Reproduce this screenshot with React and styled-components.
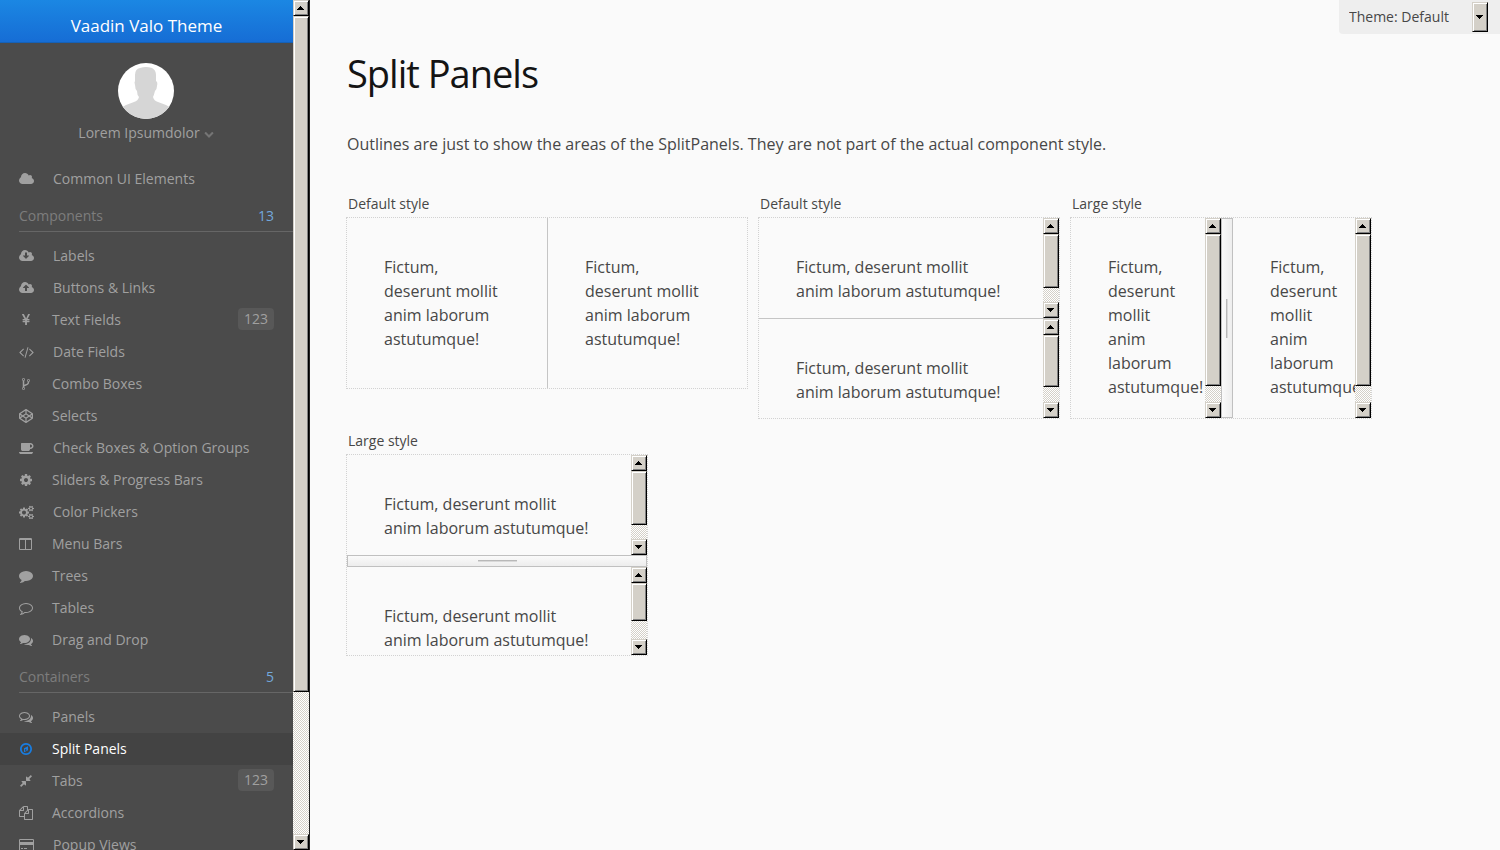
import React from "react";
import styled, { createGlobalStyle, css } from "styled-components";
import { FaCodepen } from "react-icons/fa";

const GlobalStyle = createGlobalStyle`
  *, *::before, *::after { box-sizing: border-box; }
  html, body, #root { height: 100%; }
  body {
    margin: 0;
    background: #fafafa;
    color: #474747;
    font: 400 16px/24px "Open Sans", "Noto Sans", sans-serif;
    overflow: hidden;
  }
  button, select { font: inherit; color: inherit; }
`;

const CLOUD =
  "M1984 1152q0 159-112.5 271.5t-271.5 112.5h-1088q-185 0-316.5-131.5t-131.5-316.5q0-130 70-240t188-165q-2-30-2-43 0-212 150-362t362-150q156 0 285.5 87t188.5 231q71-62 166-62 106 0 181 75t75 181q0 76-41 138 130 31 213.5 135.5t83.5 238.5z";
const BUBBLE =
  "M1792 896q0 174-120 321.5t-326 233-450 85.5q-70 0-145-8-198 175-460 242-49 14-114 22-17 2-30.5-9t-17.5-29v-1q-3-4-.5-12t2-10 4.5-9.5l6-9 7-8.5 8-9q7-8 31-34.5t34.5-38 31-39.5 32.5-51 27-59 26-76q-157-89-247.5-220t-90.5-281q0-130 71-248.5t191-204.5 286-136.5 348-50.5q244 0 450 85.5t326 233 120 321.5z";
const BACK_BUBBLE =
  "M1792 1024q0 120-71 224.5t-195 176.5q10 24 20.5 44t25 38.5 22.5 29 26 29.5 23 25q1 1 4 4.5t4.5 5 4 5 3.5 5.5l2.5 5 2 6 .5 6.5-1 6.5q-3 14-13 22t-22 7q-50-7-86-16-154-40-278-128-90 16-176 16-271 0-472-132 58 4 88 4 161 0 309-45t264-129q125-92 192-212t67-254q0-77-23-152 129 71 204 178t75 230z";
const FRONT_BUBBLE =
  "M1408 768q0 139-94 257t-256.5 186.5-353.5 68.5q-86 0-176-16-124 88-278 128-36 9-86 16h-3q-11 0-20.5-8t-11.5-21q-1-3-1-6.5t.5-6.5 2-6l2.5-5 3.5-5.5 4-5 4.5-5 4-4.5q5-6 23-25t26-29.5 22.5-29 25-38.5 20.5-44q-124-72-195-177t-71-224q0-139 94-257t256.5-186.5 353.5-68.5 353.5 68.5 256.5 186.5 94 257z";
const SMALL_COG =
  "v140q0 16-149 31-12 27-30 52 51 113 51 138 0 4-4 7-122 71-124 71-8 0-46-47t-52-68q-20 2-30 2t-30-2q-14 21-52 68t-46 47q-2 0-124-71-4-3-4-7 0-25 51-138-18-25-30-52-149-15-149-31v-140q0-16 149-31 13-29 30-52-51-113-51-138 0-4 4-7 4-2 35-20t59-34 30-16q8 0 46 46.5t52 67.5q20-2 30-2t30 2q51-71 92-112l6-2q4 0 124 70 4 3 4 7 0 25-51 138 17 23 30 52 149 15 149 31z";

const glyphs = {
  cloud: { x: 64, w: 1920, d: CLOUD },
  download: {
    x: 64,
    w: 1920,
    d: "M1344 864q0-14-9-23t-23-9h-224v-352q0-13-9.5-22.5t-22.5-9.5h-192q-13 0-22.5 9.5t-9.5 22.5v352h-224q-13 0-22.5 9.5t-9.5 22.5q0 14 9 23l352 352q9 9 23 9t23-9l351-351q10-12 10-24z" + CLOUD,
  },
  upload: {
    x: 64,
    w: 1920,
    d: "M1344 864q0-14-9-23l-352-352q-9-9-23-9t-23 9l-351 351q-10 12-10 24 0 14 9 23t23 9h224v352q0 13 9.5 22.5t22.5 9.5h192q13 0 22.5-9.5t9.5-22.5v-352h224q13 0 22.5-9.5t9.5-22.5z" + CLOUD,
  },
  yen: {
    x: 0,
    w: 1792,
    d: "M985.5 1536h-172q-13 0-22.5-9t-9.5-23v-330h-288q-13 0-22.5-9t-9.5-23v-103q0-13 9.5-22.5t22.5-9.5h288v-85h-288q-13 0-22.5-9t-9.5-23v-104q0-13 9.5-22.5t22.5-9.5h214l-321-578q-8-16 0-32 10-16 28-16h194q19 0 29 18l215 425q19 38 56 125 10-24 30.5-68t27.5-61l191-420q8-19 29-19h191q17 0 27 16 9 14 1 31l-313 579h215q13 0 22.5 9.5t9.5 22.5v104q0 14-9.5 23t-22.5 9h-290v85h290q13 0 22.5 9.5t9.5 22.5v103q0 14-9.5 23t-22.5 9h-290v330q0 13-9.5 22.5t-22.5 9.5z",
  },
  code: {
    x: 64,
    w: 1920,
    d: "M681 1399l-50 50q-10 10-23 10t-23-10l-466-466q-10-10-10-23t10-23l466-466q10-10 23-10t23 10l50 50q10 10 10 23t-10 23l-393 393 393 393q10 10 10 23t-10 23zm591-1067l-373 1291q-4 13-15.5 19.5t-23.5 2.5l-62-17q-13-4-19.5-15.5t-2.5-24.5l373-1291q4-13 15.5-19.5t23.5-2.5l62 17q13 4 19.5 15.5t2.5 24.5zm657 651l-466 466q-10 10-23 10t-23-10l-50-50q-10-10-10-23t10-23l393-393-393-393q-10-10-10-23t10-23l50-50q10-10 23-10t23 10l466 466q10 10 10 23t-10 23z",
  },
  fork: {
    x: 0,
    w: 1792,
    d: "M672 1472q0-40-28-68t-68-28-68 28-28 68 28 68 68 28 68-28 28-68zm0-1152q0-40-28-68t-68-28-68 28-28 68 28 68 68 28 68-28 28-68zm640 128q0-40-28-68t-68-28-68 28-28 68 28 68 68 28 68-28 28-68zm96 0q0 52-26 96.5t-70 69.5q-2 287-226 414-67 38-203 81-128 40-169.5 71t-41.5 100v26q44 25 70 69.5t26 96.5q0 80-56 136t-136 56-136-56-56-136q0-52 26-96.5t70-69.5v-820q-44-25-70-69.5t-26-96.5q0-80 56-136t136-56 136 56 56 136q0 52-26 96.5t-70 69.5v497q54-26 154-57 55-17 87.5-29.5t70.5-31 59-39.5 40.5-51 28-69.5 8.5-91.5q-44-25-70-69.5t-26-96.5q0-80 56-136t136-56 136 56 56 136z",
  },
  coffee: {
    x: 0,
    w: 1920,
    d: "M1664 640q0-80-56-136t-136-56h-64v384h64q80 0 136-56t56-136zm-1664 768h1792q0 106-75 181t-181 75h-1280q-106 0-181-75t-75-181zm1856-768q0 159-112.5 271.5t-271.5 112.5h-64v32q0 92-66 158t-158 66h-704q-92 0-158-66t-66-158v-736q0-26 19-45t45-19h1152q159 0 271.5 112.5t112.5 271.5z",
  },
  cog: {
    x: 0,
    w: 1792,
    d: "M1152 896q0-106-75-181t-181-75-181 75-75 181 75 181 181 75 181-75 75-181zm512-109v222q0 12-8 23t-20 13l-185 28q-19 54-39 91 35 50 107 138 10 12 10 25t-9 23q-27 37-99 108t-94 71q-12 0-26-9l-138-108q-44 23-91 38-16 136-29 186-7 28-36 28h-222q-14 0-24.5-8.5t-11.5-21.5l-28-184q-49-16-90-37l-141 107q-10 9-25 9-14 0-25-11-126-114-165-168-7-10-7-23 0-12 8-23 15-21 51-66.5t54-70.5q-27-50-41-99l-183-27q-13-2-21-12.5t-8-23.5v-222q0-12 8-23t19-13l186-28q14-46 39-92-40-57-107-138-10-12-10-24 0-10 9-23 26-36 98.5-107.5t94.5-71.5q13 0 26 10l138 107q44-23 91-38 16-136 29-186 7-28 36-28h222q14 0 24.5 8.5t11.5 21.5l28 184q49 16 90 37l142-107q9-9 24-9 13 0 25 10 129 119 165 170 7 8 7 22 0 12-8 23-15 21-51 66.5t-54 70.5q26 50 41 98l183 28q13 2 21 12.5t8 23.5z",
  },
  cogs: {
    x: 0,
    w: 1920,
    d:
      "M896 960q0-106-75-181t-181-75-181 75-75 181 75 181 181 75 181-75 75-181zm768 512q0-52-38-90t-90-38-90 38-38 90q0 53 37.5 90.5t90.5 37.5 90.5-37.5 37.5-90.5zm0-1024q0-52-38-90t-90-38-90 38-38 90q0 53 37.5 90.5t90.5 37.5 90.5-37.5 37.5-90.5zm-384 421v185q0 10-7 19.5t-16 10.5l-155 24q-11 35-32 76 34 48 90 115 7 11 7 20 0 12-7 19-23 30-82.5 89.5t-78.5 59.5q-11 0-21-7l-115-90q-37 19-77 31-11 108-23 155-7 24-30 24h-186q-11 0-20-7.5t-10-17.5l-23-153q-34-10-75-31l-118 89q-7 7-20 7-11 0-21-8-144-133-144-160 0-9 7-19 10-14 41-53t47-61q-23-44-35-82l-152-24q-10-1-17-9.5t-7-19.5v-185q0-10 7-19.5t16-10.5l155-24q11-35 32-76-34-48-90-115-7-11-7-20 0-12 7-20 22-30 82-89t79-59q11 0 21 7l115 90q34-18 77-32 11-108 23-154 7-24 30-24h186q11 0 20 7.5t10 17.5l23 153q34 10 75 31l118-89q8-7 20-7 11 0 21 8 144 133 144 160 0 8-7 19-12 16-42 54t-45 60q23 48 34 82l152 23q10 2 17 10.5t7 19.5z" +
      "M1920 1402" + SMALL_COG + "M1920 378" + SMALL_COG,
  },
  columns: {
    x: 0,
    w: 1792,
    d: "M160 1536h608v-1152h-640v1120q0 13 9.5 22.5t22.5 9.5zm1376-32v-1120h-640v1152h608q13 0 22.5-9.5t9.5-22.5zm128-1216v1216q0 66-47 113t-113 47h-1344q-66 0-113-47t-47-113v-1216q0-66 47-113t113-47h1344q66 0 113 47t47 113z",
  },
  comment: { x: 0, w: 1792, d: BUBBLE },
  commentOutline: {
    x: 0,
    w: 1792,
    d: "M896 384q-204 0-381.5 69.5t-282 187.5-104.5 255q0 112 71.5 213.5t201.5 175.5l87 50-27 96q-24 91-70 172 152-63 275-171l43-38 57 6q69 8 130 8 204 0 381.5-69.5t282-187.5 104.5-255-104.5-255-282-187.5-381.5-69.5z" + BUBBLE,
  },
  comments: { x: 0, w: 1792, d: FRONT_BUBBLE + BACK_BUBBLE },
  commentsOutline: {
    x: 0,
    w: 1792,
    d: "M704 384q-153 0-286 52t-211.5 141-78.5 191q0 82 53 158t149 132l97 56-35 84q34-20 62-39l44-31 53 10q78 14 153 14 153 0 286-52t211.5-141 78.5-191-78.5-191-211.5-141-286-52z" + FRONT_BUBBLE + BACK_BUBBLE,
  },
  compass: {
    x: -128,
    w: 1792,
    d: "M640 1152l256-128-256-128v256zm384-623v542l-512 256v-542zm288 367q0-148-73-273t-198-198-273-73-273 73-198 198-73 273 73 273 198 198 273 73 273-73 198-198 73-273zm224 0q0 209-103 385.5t-279.5 279.5-385.5 103-385.5-103-279.5-279.5-103-385.5 103-385.5 279.5-279.5 385.5-103 385.5 103 279.5 279.5 103 385.5z",
  },
  compress: {
    x: 0,
    w: 1792,
    d: "M896 960v448q0 26-19 45t-45 19-45-19l-144-144-332 332q-10 10-23 10t-23-10l-114-114q-10-10-10-23t10-23l332-332-144-144q-19-19-19-45t19-45 45-19h448q26 0 45 19t19 45zm755-672q0 13-10 23l-332 332 144 144q19 19 19 45t-19 45-45 19h-448q-26 0-45-19t-19-45v-448q0-26 19-45t45-19 45 19l144 144 332-332q10-10 23-10t23 10l114 114q10 10 10 23z",
  },
  copy: {
    x: 0,
    w: 1792,
    d: "M1696 384q40 0 68 28t28 68v1216q0 40-28 68t-68 28h-960q-40 0-68-28t-28-68v-288h-544q-40 0-68-28t-28-68v-672q0-40 20-88t48-76l408-408q28-28 76-48t88-20h416q40 0 68 28t28 68v328q68-40 128-40h416zm-544 213l-299 299h299v-299zm-640-384l-299 299h299v-299zm196 647l316-316v-416h-384v416q0 40-28 68t-68 28h-416v640h512v-256q0-40 20-88t48-76zm956 804v-1152h-384v416q0 40-28 68t-68 28h-416v640h896z",
  },
  card: {
    x: 0,
    w: 1920,
    d: "M1760 128q66 0 113 47t47 113v1216q0 66-47 113t-113 47h-1600q-66 0-113-47t-47-113v-1216q0-66 47-113t113-47h1600zm-1600 128q-13 0-22.5 9.5t-9.5 22.5v224h1664v-224q0-13-9.5-22.5t-22.5-9.5h-1600zm1600 1280q13 0 22.5-9.5t9.5-22.5v-608h-1664v608q0 13 9.5 22.5t22.5 9.5h1600zm-1504-128v-128h256v128h-256zm384 0v-128h384v128h-384z",
  },
  chevron: {
    x: 0,
    w: 1792,
    d: "M1683 808l-742 741q-19 19-45 19t-45-19l-742-741q-19-19-19-45.5t19-45.5l166-165q19-19 45-19t45 19l531 531 531-531q19-19 45-19t45 19l166 165q19 19 19 45.5t-19 45.5z",
  },
};

const IconSvg = styled.svg`
  flex: none;
  fill: currentColor;
`;

function Icon({ name, size = 14 }) {
  if (name === "codepen") return <FaCodepen size={size} />;
  const { x, w, d } = glyphs[name];
  return (
    <IconSvg width={(size * w) / 1792} height={size} viewBox={`${x} 0 ${w} 1792`} aria-hidden="true">
      <path fillRule="evenodd" d={d} />
    </IconSvg>
  );
}

/* ---------- scroll bars ---------- */

const raised = css`
  background: #d4d0c8;
  border: 1px solid;
  border-color: #d4d0c8 #000 #000 #d4d0c8;
  box-shadow: inset 1px 1px #fff, inset -1px -1px #808080;
`;

const Track = styled.div`
  flex: none;
  width: ${(p) => (p.$edge ? 17 : 16)}px;
  min-height: 0;
  display: flex;
  flex-direction: column;
  background: repeating-conic-gradient(#d4d0c8 0 25%, #fff 0 50%) 0 0 / 2px 2px;
  border-right: ${(p) => (p.$edge ? "1px solid #222" : "0")};
`;

const ArrowButton = styled.button`
  ${raised}
  flex: none;
  width: 16px;
  height: ${(p) => (p.$tall ? 30 : 16)}px;
  padding: 0 1px 0 0;
  display: grid;
  place-items: center;
`;

const Thumb = styled.div`
  ${raised}
  width: 16px;
  flex: 0 0 ${(p) => p.$share}%;
`;

const Rail = styled.div`
  flex: 1;
  min-height: 0;
  display: flex;
  flex-direction: column;
`;

function Arrow({ up }) {
  return (
    <svg width="7" height="4" viewBox="0 0 7 4" shapeRendering="crispEdges" aria-hidden="true">
      <path d={up ? "M3 0h1v1h1v1h1v1h1v1H0V3h1V2h1V1h1z" : "M0 0h7v1H6v1H5v1H4v1H3V3H2V2H1V1H0z"} />
    </svg>
  );
}

function Scrollbar({ share, edge }) {
  return (
    <Track $edge={edge}>
      <ArrowButton type="button" aria-label="Scroll up"><Arrow up /></ArrowButton>
      <Rail><Thumb $share={share} /></Rail>
      <ArrowButton type="button" aria-label="Scroll down"><Arrow /></ArrowButton>
    </Track>
  );
}

/* ---------- side menu ---------- */

const Page = styled.div`
  display: flex;
  height: 100vh;
`;

const Sidebar = styled.aside`
  flex: none;
  display: flex;
  min-height: 0;
`;

const Menu = styled.div`
  width: 293px;
  overflow: hidden;
  background: #4b4b4b;
  color: #a0a0a0;
  font-size: 14px;
`;

const MenuTitle = styled.div`
  height: 43px;
  padding-top: 10px;
  background: linear-gradient(#1b87e3, #166dd5);
  border-bottom: 1px solid #1661b6;
  color: #fff;
  font-size: 17px;
  line-height: 32px;
  text-align: center;
`;

const UserButton = styled.button`
  width: 100%;
  padding: 20px 1px 0 0;
  border: 0;
  background: none;
  display: flex;
  flex-direction: column;
  align-items: center;
`;

const UserName = styled.span`
  display: flex;
  align-items: center;
  gap: 4px;
  height: 28px;
  svg { opacity: 0.5; margin-top: 2px; }
`;

const Nav = styled.nav`
  padding-top: 16px;
`;

const Item = styled.a`
  display: flex;
  align-items: center;
  height: 32px;
  padding: 0 19px;
  color: ${(p) => (p.$selected ? "#fff" : "inherit")};
  background: ${(p) => (p.$selected ? "#434343" : "none")};
  text-decoration: none;
  white-space: nowrap;
  > svg {
    flex: none;
    margin-right: 19px;
    color: ${(p) => (p.$selected ? "#197de1" : "inherit")};
  }
`;

const Badge = styled.span`
  margin-left: auto;
  padding: 0 6px;
  border-radius: 4px;
  background: #585858;
  line-height: 22px;
  margin-bottom: 2px;
`;

const Heading = styled.h2`
  display: flex;
  justify-content: space-between;
  margin: 5px 0 8px 19px;
  padding-right: 19px;
  height: 32px;
  border-bottom: 1px solid #666;
  color: #7d7d7d;
  font-size: 14px;
  font-weight: 400;
  line-height: 32px;
`;

const Count = styled.span`
  color: #73a8dc;
`;

const components = [
  ["download", "Labels"],
  ["upload", "Buttons & Links"],
  ["yen", "Text Fields", 123],
  ["code", "Date Fields"],
  ["fork", "Combo Boxes"],
  ["codepen", "Selects"],
  ["coffee", "Check Boxes & Option Groups"],
  ["cog", "Sliders & Progress Bars"],
  ["cogs", "Color Pickers"],
  ["columns", "Menu Bars"],
  ["comment", "Trees"],
  ["commentOutline", "Tables"],
  ["comments", "Drag and Drop"],
];

const containers = [
  ["commentsOutline", "Panels"],
  ["compass", "Split Panels"],
  ["compress", "Tabs", 123],
  ["copy", "Accordions"],
  ["card", "Popup Views"],
];

function MenuItem({ icon, label, badge }) {
  const selected = label === "Split Panels";
  return (
    <Item href="#" $selected={selected} aria-current={selected ? "page" : undefined}>
      <Icon name={icon} />
      {label}
      {badge && <Badge>{badge}</Badge>}
    </Item>
  );
}

function Avatar() {
  return (
    <svg width="56" height="56" viewBox="0 0 56 56" aria-hidden="true">
      <defs><clipPath id="face"><circle cx="28" cy="28" r="28" /></clipPath></defs>
      <circle cx="28" cy="28" r="28" fill="#fff" />
      <path
        clipPath="url(#face)"
        fill="#d6d6d6"
        d="M17 12Q17 6 22 5Q28 3 34 5Q38 7 38 12L38 18Q40 19 39 23Q39 26 37 28Q36 32 35 34Q36 38 40 39L48 42Q53 44 56 48V56H0V48Q3 44 8 42L16 39Q20 38 21 34Q19 32 19 28Q17 26 17 22Q16 19 17 18Z"
      />
    </svg>
  );
}

/* ---------- content ---------- */

const Content = styled.main`
  flex: 1;
  min-width: 0;
  padding: 48px 37px;
`;

const Title = styled.h1`
  margin: 0;
  color: #141414;
  font-size: 38px;
  font-weight: 400;
  line-height: 50px;
  letter-spacing: -1px;
`;

const Intro = styled.p`
  margin: 34px 0 36px;
`;

const Examples = styled.div`
  display: flex;
  flex-wrap: wrap;
  align-items: flex-start;
  gap: 10px;
  margin-left: -1px;
`;

const Example = styled.figure`
  margin: 0;
`;

const Caption = styled.figcaption`
  padding-left: 2px;
  height: 25px;
  font-size: 14px;
`;

const Split = styled.div`
  display: flex;
  flex-direction: ${(p) => (p.$vertical ? "column" : "row")};
  width: ${(p) => p.$width}px;
  height: ${(p) => p.$height}px;
  border: 1px dotted #d2d2d2;
`;

const Pane = styled.div`
  flex: ${(p) => (p.$first ? "0 0 50%" : "1")};
  min-width: 0;
  min-height: 0;
  display: flex;
`;

const PaneText = styled.div`
  flex: 1;
  min-width: 0;
  padding: 37px 38px 37px 37px;
  overflow: hidden;
`;

const Divider = styled.div`
  flex: none;
  ${(p) => (p.$vertical ? "height: 1px;" : "width: 1px;")}
  background: #c5c5c5;
`;

const LargeDivider = styled.div`
  flex: none;
  display: flex;
  align-items: center;
  justify-content: center;
  border: 1px solid #c0c0c0;
  ${(p) => (p.$vertical ? "height: 12px;" : "width: 12px;")}
  background: linear-gradient(${(p) => (p.$vertical ? "to bottom" : "to right")}, #fafafa, #ededed);
  &::after {
    content: "";
    ${(p) => (p.$vertical ? "width: 39px; height: 2px;" : "width: 2px; height: 39px;")}
    border: solid #b8b8b8;
    border-width: ${(p) => (p.$vertical ? "1px 0 0 0" : "0 0 0 1px")};
    background: #d8d8d8;
  }
`;

function SplitPanel({ caption, vertical, large, width, height, shares }) {
  const Bar = large ? LargeDivider : Divider;
  const pane = (index) => (
    <Pane $first={index === 0}>
      <PaneText>Fictum, deserunt mollit anim laborum astutumque!</PaneText>
      {shares && <Scrollbar share={shares[index]} />}
    </Pane>
  );
  return (
    <Example>
      <Caption>{caption}</Caption>
      <Split $vertical={vertical} $width={width} $height={height}>
        {pane(0)}
        <Bar $vertical={vertical} role="separator" />
        {pane(1)}
      </Split>
    </Example>
  );
}

/* ---------- theme picker ---------- */

const ThemeBox = styled.div`
  position: fixed;
  top: 0;
  right: 0;
  display: flex;
  width: 161px;
  height: 34px;
  padding: 2px 12px 2px 10px;
  background: #eee;
  border-radius: 0 0 0 4px;
`;

const ThemeSelect = styled.select`
  flex: 1;
  min-width: 0;
  padding: 0;
  border: 0;
  background: none;
  appearance: none;
  font-size: 14px;
`;

export default function App() {
  return (
    <Page>
      <GlobalStyle />
      <Sidebar>
        <Menu>
          <MenuTitle>Vaadin Valo Theme</MenuTitle>
          <UserButton type="button">
            <Avatar />
            <UserName>Lorem Ipsumdolor <Icon name="chevron" size={10} /></UserName>
          </UserButton>
          <Nav>
            <MenuItem icon="cloud" label="Common UI Elements" />
            <Heading>Components <Count>13</Count></Heading>
            {components.map(([icon, label, badge]) => (
              <MenuItem key={label} icon={icon} label={label} badge={badge} />
            ))}
            <Heading>Containers <Count>5</Count></Heading>
            {containers.map(([icon, label, badge]) => (
              <MenuItem key={label} icon={icon} label={label} badge={badge} />
            ))}
          </Nav>
        </Menu>
        <Scrollbar share={82.6} edge />
      </Sidebar>
      <Content>
        <Title>Split Panels</Title>
        <Intro>Outlines are just to show the areas of the SplitPanels. They are not part of the actual component style.</Intro>
        <Examples>
          <SplitPanel caption="Default style" width={402} height={172} />
          <SplitPanel caption="Default style" vertical width={302} height={202} shares={[80, 78]} />
          <SplitPanel caption="Large style" large width={302} height={202} shares={[90.5, 90.5]} />
          <SplitPanel caption="Large style" vertical large width={302} height={202} shares={[80, 68]} />
        </Examples>
      </Content>
      <ThemeBox>
        <ThemeSelect aria-label="Theme" defaultValue="default">
          <option value="default">Theme: Default</option>
        </ThemeSelect>
        <ArrowButton $tall type="button" aria-label="Choose theme"><Arrow /></ArrowButton>
      </ThemeBox>
    </Page>
  );
}
